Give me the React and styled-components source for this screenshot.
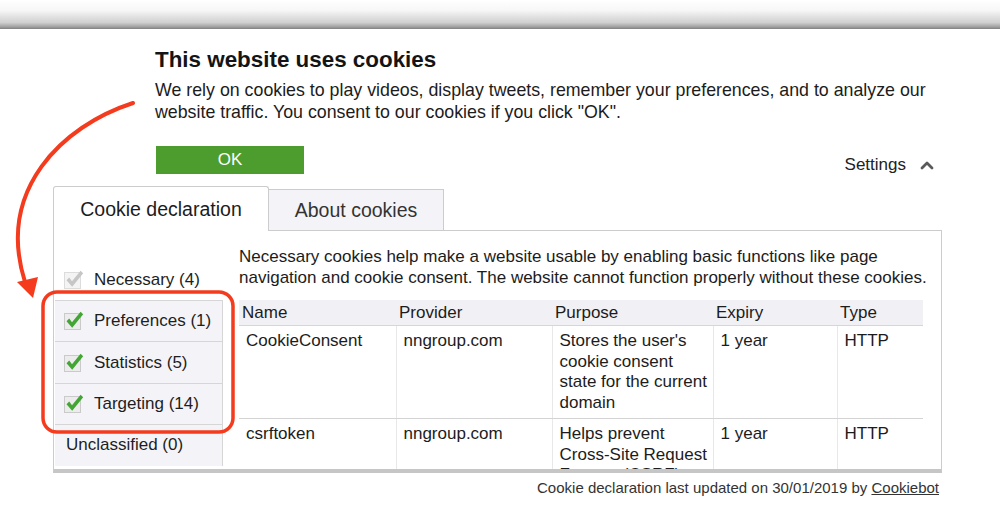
import React from "react";
import styled, { createGlobalStyle } from "styled-components";

const Global = createGlobalStyle`
  html, body { margin: 0; padding: 0; background: #fff; }
  * { box-sizing: border-box; }
`;

const Root = styled.div`
  position: relative;
  width: 1000px;
  height: 515px;
  overflow: hidden;
  background: #fff;
  font-family: "Liberation Sans", Arial, sans-serif;
  color: #1c1c1c;
`;

const TopShade = styled.div`
  height: 29px;
  background: linear-gradient(
    to bottom,
    #ffffff 0%,
    #f7f7f7 35%,
    #cfcfcf 78%,
    #a2a2a2 92%,
    #7f7f7f 100%
  );
`;

const Main = styled.div`
  padding: 0 58px 0 53px;
`;

const Intro = styled.div`
  margin: 18px 0 0 102px;
`;

const Title = styled.h2`
  margin: 0;
  font-size: 22.4px;
  line-height: 26px;
  font-weight: bold;
  color: #141414;
`;

const Lead = styled.p`
  margin: 6px 0 0;
  font-size: 17.8px;
  line-height: 22px;
  color: #1c1c1c;
`;

const ActionRow = styled.div`
  display: flex;
  justify-content: space-between;
  align-items: flex-end;
  margin: 23px 0 0 103px;
  padding-right: 8px;
`;

const OkButton = styled.button`
  width: 148px;
  height: 28px;
  padding: 0;
  border: none;
  background: #4c9d2e;
  color: #fff;
  font-family: inherit;
  font-size: 17px;
  line-height: 28px;
`;

const SettingsToggle = styled.div`
  display: flex;
  align-items: center;
  gap: 14px;
  font-size: 17px;
  line-height: 18px;
  color: #222;
`;

const Tabs = styled.div`
  display: flex;
  align-items: flex-end;
  margin-top: 12px;
`;

const Tab = styled.div`
  display: flex;
  align-items: center;
  justify-content: center;
  font-size: 19.5px;
  border: 1px solid #cccccc;
  border-bottom: none;
  ${(p) =>
    p.$active
      ? `
    position: relative;
    z-index: 1;
    width: 216px;
    height: 45px;
    margin-bottom: -1px;
    background: #fff;
    color: #1c1c1c;
    border-radius: 3px 3px 0 0;
  `
      : `
    width: 175px;
    height: 41px;
    border-left: none;
    background: #f4f4f8;
    color: #333;
  `}
`;

const Panel = styled.div`
  display: flex;
  height: 243px;
  border: 1px solid #cccccc;
  border-bottom: 4px solid #c6c6c6;
  overflow: hidden;
`;

const Nav = styled.div`
  flex-shrink: 0;
  width: 168px;
  margin-left: 1px;
  padding-top: 28px;
`;

const NavItem = styled.div`
  display: flex;
  align-items: center;
  gap: 10px;
  height: ${(p) => (p.$boxed ? "41.4px" : "41px")};
  padding-left: ${(p) => (p.$noBox ? "11px" : "9px")};
  font-size: 17px;
  color: #1e1e1e;
  background: ${(p) => (p.$boxed ? "#f4f4f8" : "transparent")};
  border-top: ${(p) => (p.$boxed ? "1px solid #d6d6d6" : "none")};
  border-right: ${(p) => (p.$boxed ? "1px solid #d6d6d6" : "none")};
`;

const Content = styled.div`
  flex: 1;
  min-width: 0;
  padding: 15px 18px 0 16px;
`;

const Desc = styled.p`
  margin: 0 -10px 0 0;
  font-size: 17px;
  line-height: 21px;
  color: #1c1c1c;
`;

const Table = styled.table`
  width: 100%;
  margin-top: 12px;
  border-collapse: collapse;
  table-layout: fixed;
  font-size: 17px;
  color: #1c1c1c;
`;

const Th = styled.th`
  height: 25px;
  padding: 0 3px;
  text-align: left;
  font-weight: normal;
  line-height: 25px;
  background: #f1f1f5;
  border-bottom: 1px solid #d6d6d6;
  white-space: nowrap;
`;

const Td = styled.td`
  vertical-align: top;
  padding: ${(p) => (p.$first ? "5px" : "5px")} 5px 5px 7px;
  line-height: 20.5px;
  border-bottom: 1px solid #d3d3d3;
  border-left: ${(p) => (p.$lead ? "none" : "1px solid #e8e8e8")};
`;

const Footer = styled.div`
  margin-top: 5px;
  padding-right: 3px;
  text-align: right;
  font-size: 15px;
  line-height: 20px;
  color: #333;
`;

const FooterLink = styled.span`
  text-decoration: underline;
`;

const Overlay = styled.svg`
  position: absolute;
  top: 0;
  left: 0;
  pointer-events: none;
`;

const Check = ({ muted }) => (
  <svg width="20" height="20" viewBox="0 0 20 20">
    <rect
      x="0.5"
      y="2.5"
      width="16"
      height="16"
      fill={muted ? "#f4f4f4" : "#ececec"}
      stroke={muted ? "#dcdcdc" : "#cacaca"}
    />
    <path
      d="M2.5 10.2 L5.2 7.6 L8 11.3 L16.6 0.8 L19.2 3.2 L8.2 16.8 Z"
      fill={muted ? "#c6c6c6" : "#43a534"}
    />
  </svg>
);

const Chevron = () => (
  <svg width="14" height="10" viewBox="0 0 14 10">
    <polyline
      points="2,8 7,3 12,8"
      fill="none"
      stroke="#5a5a5a"
      strokeWidth="2.8"
      strokeLinecap="round"
      strokeLinejoin="round"
    />
  </svg>
);

const rows = [
  {
    name: "CookieConsent",
    provider: "nngroup.com",
    purpose: "Stores the user's cookie consent state for the current domain",
    expiry: "1 year",
    type: "HTTP",
  },
  {
    name: "csrftoken",
    provider: "nngroup.com",
    purpose: "Helps prevent Cross-Site Request Forgery (CSRF) attacks.",
    expiry: "1 year",
    type: "HTTP",
  },
];

const categories = [
  { label: "Preferences (1)", check: true },
  { label: "Statistics (5)", check: true },
  { label: "Targeting (14)", check: true },
  { label: "Unclassified (0)", check: false },
];

export default function App() {
  return (
    <Root>
      <Global />
      <TopShade />
      <Main>
        <Intro>
          <Title>This website uses cookies</Title>
          <Lead>
            We rely on cookies to play videos, display tweets, remember your
            preferences, and to analyze our website traffic. You consent to our
            cookies if you click "OK".
          </Lead>
        </Intro>
        <ActionRow>
          <OkButton>OK</OkButton>
          <SettingsToggle>
            Settings
            <Chevron />
          </SettingsToggle>
        </ActionRow>
        <Tabs>
          <Tab $active>Cookie declaration</Tab>
          <Tab>About cookies</Tab>
        </Tabs>
        <Panel>
          <Nav>
            <NavItem>
              <Check muted />
              Necessary (4)
            </NavItem>
            {categories.map((c) => (
              <NavItem key={c.label} $boxed $noBox={!c.check}>
                {c.check && <Check />}
                {c.label}
              </NavItem>
            ))}
          </Nav>
          <Content>
            <Desc>
              Necessary cookies help make a website usable by enabling basic
              functions like page navigation and cookie consent. The website
              cannot function properly without these cookies.
            </Desc>
            <Table>
              <colgroup>
                <col style={{ width: "157px" }} />
                <col style={{ width: "156px" }} />
                <col style={{ width: "161px" }} />
                <col style={{ width: "124px" }} />
                <col />
              </colgroup>
              <thead>
                <tr>
                  <Th>Name</Th>
                  <Th>Provider</Th>
                  <Th>Purpose</Th>
                  <Th>Expiry</Th>
                  <Th>Type</Th>
                </tr>
              </thead>
              <tbody>
                {rows.map((r, i) => (
                  <tr key={r.name}>
                    <Td $lead $first={i === 0}>{r.name}</Td>
                    <Td $first={i === 0}>{r.provider}</Td>
                    <Td $first={i === 0}>{r.purpose}</Td>
                    <Td $first={i === 0}>{r.expiry}</Td>
                    <Td $first={i === 0}>{r.type}</Td>
                  </tr>
                ))}
              </tbody>
            </Table>
          </Content>
        </Panel>
        <Footer>
          Cookie declaration last updated on 30/01/2019 by{" "}
          <FooterLink>Cookiebot</FooterLink>
        </Footer>
      </Main>
      <Overlay width="1000" height="515" viewBox="0 0 1000 515">
        <path
          d="M133 103 C 62 126, -4 190, 25 282"
          fill="none"
          stroke="#f43b1d"
          strokeWidth="4"
          strokeLinecap="round"
        />
        <polygon points="17,282 38,277 33,298" fill="#f43b1d" />
        <rect
          x="43"
          y="292"
          width="190"
          height="140"
          rx="14"
          ry="14"
          fill="none"
          stroke="#f43b1d"
          strokeWidth="3.5"
        />
      </Overlay>
    </Root>
  );
}
